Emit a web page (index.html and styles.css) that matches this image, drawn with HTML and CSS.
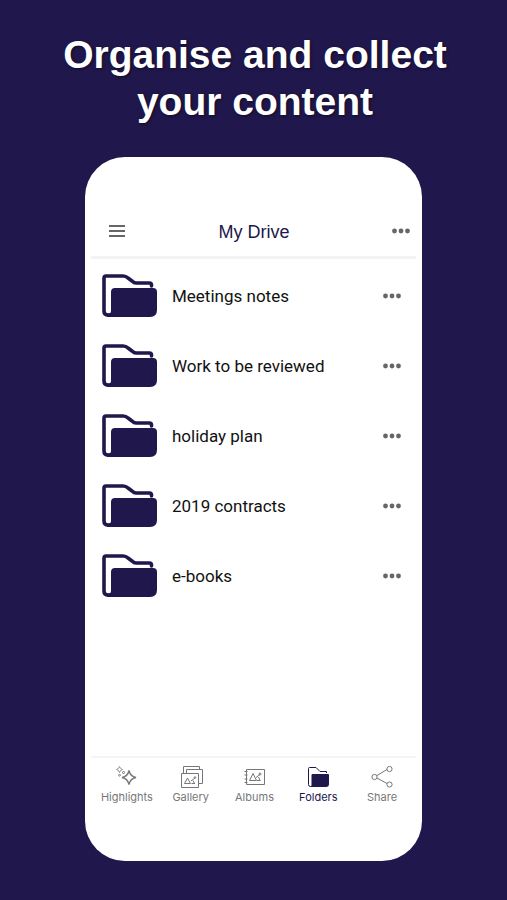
FILE: index.html
```html
<!DOCTYPE html>
<html lang="en">
<head>
<meta charset="utf-8">
<meta name="viewport" content="width=device-width, initial-scale=1">
<title>My Drive</title>
<link rel="stylesheet" href="styles.css">
</head>
<body>
<svg class="defs" aria-hidden="true">
  <symbol id="folder" viewBox="0 0 56 44">
    <path d="M49.500 12v-1q0-2-2-2H34q-2 0-4-2l-4-3q-2-2-5-2H4Q2 2 2 4v33q0 4 4 4h3" fill="none" stroke="currentColor" stroke-width="3.600" stroke-linecap="round" stroke-linejoin="round"/>
    <path d="M9 18q0-4 4-4h38q4 0 4 4v18q0 7-7 7H5v-3q4 0 4-3z" fill="currentColor"/>
  </symbol>
  <symbol id="dots" viewBox="0 0 18 6">
    <circle cx="2.500" cy="3" r="2.400"/><circle cx="9" cy="3" r="2.400"/><circle cx="15.500" cy="3" r="2.400"/>
  </symbol>
</svg>
<h1 class="headline">Organise and collect<br>your content</h1>
<main class="phone">
  <header class="bar">
    <button class="icon-button" aria-label="Menu"><svg width="18" height="14" viewBox="0 0 18 14"><path d="M1 2h16M1 7h16M1 12h16" stroke="currentColor" stroke-width="2"/></svg></button>
    <h2 class="title">My Drive</h2>
    <button class="icon-button" aria-label="More options"><svg class="dots"><use href="#dots"/></svg></button>
  </header>
  <ul class="files">
    <li class="file"><svg class="folder" aria-hidden="true"><use href="#folder"/></svg><span class="name">Meetings notes</span><button class="icon-button" aria-label="Options for Meetings notes"><svg class="dots"><use href="#dots"/></svg></button></li>
    <li class="file"><svg class="folder" aria-hidden="true"><use href="#folder"/></svg><span class="name">Work to be reviewed</span><button class="icon-button" aria-label="Options for Work to be reviewed"><svg class="dots"><use href="#dots"/></svg></button></li>
    <li class="file"><svg class="folder" aria-hidden="true"><use href="#folder"/></svg><span class="name">holiday plan</span><button class="icon-button" aria-label="Options for holiday plan"><svg class="dots"><use href="#dots"/></svg></button></li>
    <li class="file"><svg class="folder" aria-hidden="true"><use href="#folder"/></svg><span class="name">2019 contracts</span><button class="icon-button" aria-label="Options for 2019 contracts"><svg class="dots"><use href="#dots"/></svg></button></li>
    <li class="file"><svg class="folder" aria-hidden="true"><use href="#folder"/></svg><span class="name">e-books</span><button class="icon-button" aria-label="Options for e-books"><svg class="dots"><use href="#dots"/></svg></button></li>
  </ul>
  <nav class="tabs">
    <a class="tab" href="#highlights"><svg class="tab-icon" viewBox="0 0 24 24"><path d="M14 5.500q1.200 5.800 7 7-5.800 1.200-7 7-1.200-5.800-7-7 5.800-1.200 7-7z" stroke-width="1.400"/><path d="M4.500 1.500q.6 2.400 3 3-2.400.6-3 3-.6-2.400-3-3 2.400-.6 3-3z M8.500 6q.3 1.200 1.500 1.500-1.200.3-1.500 1.500-.3-1.200-1.500-1.500 1.200-.3 1.500-1.500z M4.500 9q.2 1 1.200 1.200-1 .2-1.200 1.200-.2-1-1.200-1.200 1-.2 1.200-1.200z" stroke-width=".8"/></svg>Highlights</a>
    <a class="tab" href="#gallery"><svg class="tab-icon" viewBox="0 0 24 24"><path d="M4.500 8.500v-7h16v3M7.500 8.500v-4h16v14h-4M2.500 8.500h17v14h-17z"/><path d="M5.500 18.500l3-5.500 3 5.500zM12 16l4-3M12.500 18.500h3.500M14 15.500l1.500 3"/><circle cx="16" cy="12.500" r=".8"/></svg>Gallery</a>
    <a class="tab" href="#albums"><svg class="tab-icon" viewBox="0 0 24 24"><path d="M4.500 4.500h18v15h-18zM2.500 6.500h3M2.500 10h3M2.500 14h3M2.500 17.500h3"/><path d="M7.500 15.500l3.500-7 3.500 7zM14 12.500l4-3M15 15.500h3.500M16.500 12l1.500 3.500"/><circle cx="18" cy="9" r="1"/></svg>Albums</a>
    <a class="tab current" href="#folders" aria-current="page"><svg class="tab-icon" viewBox="0 0 24 24"><path d="M20.500 8V6.500H14l-4-4H3.500q-1 0-1 1v16q0 2 2 2h2"/><path d="M5.500 10q0-1 1-1H22q1 0 1 1v9q0 3-3 3H4.500q1-1 1-2z" fill="currentColor" stroke="none"/></svg>Folders</a>
    <a class="tab" href="#share"><svg class="tab-icon" viewBox="0 0 24 24"><path d="M7 10.500l10-6M7 13l10 5.500"/><circle cx="4.500" cy="12" r="2.600"/><circle cx="19.500" cy="4" r="2.600"/><circle cx="19.500" cy="19.500" r="2.600"/></svg>Share</a>
  </nav>
</main>
</body>
</html>
```
FILE: styles.css
```css
* { box-sizing: border-box; }

body {
  margin: 0;
  min-height: 100vh;
  display: flex;
  flex-direction: column;
  padding: 31px 85px 39px;
  background: #20174c;
  font-family: Roboto, sans-serif;
}

.defs { position: absolute; width: 0; height: 0; }

.headline {
  margin: 0 -88px 32px -85px;
  color: #fff;
  font: bold 39px/47px "Liberation Sans", Arial, sans-serif;
  text-align: center;
  text-shadow: 1px 1px 3px #0008;
}

.phone {
  flex: 1;
  display: flex;
  flex-direction: column;
  padding: 48px 6px 40px;
  border-radius: 40px;
  background: #fff;
}

.icon-button {
  display: flex;
  padding: 4px;
  border: 0;
  background: none;
  color: #666;
}

.dots { width: 18px; height: 6px; fill: currentColor; }

.bar {
  display: grid;
  grid-template-columns: 26px 1fr 26px;
  align-items: center;
  height: 54px;
  padding: 0 2px 0 13px;
  border-bottom: 3px solid #f3f3f3;
}

.title {
  margin: 0;
  padding: 2px 10px 0 0;
  color: #20174c;
  font: 18px/24px "Liberation Sans", Arial, sans-serif;
  text-align: center;
}

.files {
  flex: 1;
  margin: 0;
  padding: 2px 11px 0;
  list-style: none;
}

.file {
  display: flex;
  align-items: center;
  gap: 14px;
  height: 70px;
}

.folder { width: 56px; height: 44px; color: #20174c; }

.name {
  flex: 1;
  color: #111;
  font-size: 17px;
  line-height: 24px;
}

.tabs {
  display: grid;
  grid-template-columns: repeat(5, 1fr);
  height: 65px;
  padding: 7px 2px 0 4px;
  border-top: 2px solid #f4f4f4;
}

.tab {
  display: flex;
  flex-direction: column;
  align-items: center;
  color: #77777b;
  font: 11px/16px Inter, sans-serif;
  text-decoration: none;
}

.tab-icon {
  width: 24px;
  height: 24px;
  fill: none;
  stroke: currentColor;
}

.current { color: #20174c; }
```
